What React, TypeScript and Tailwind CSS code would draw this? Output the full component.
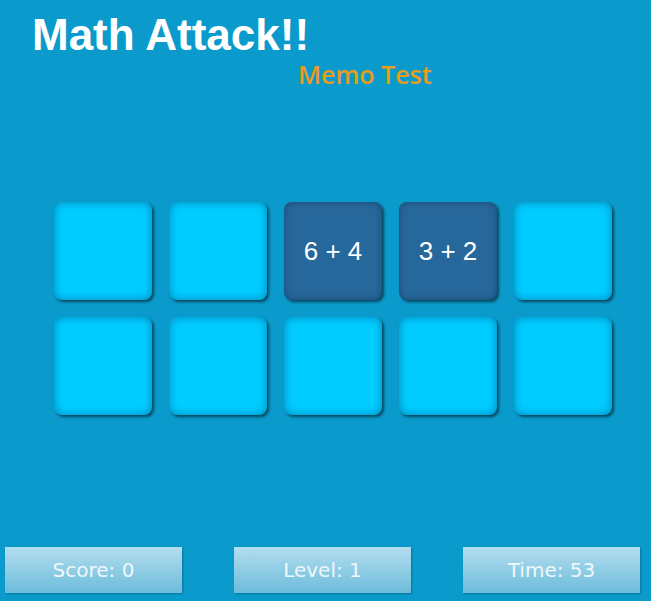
const tiles: (string | null)[] = [
  null, null, '6 + 4', '3 + 2', null,
  null, null, null, null, null,
];

const stats = ['Score: 0', 'Level: 1', 'Time: 53'];

function Tile({ label }: { label: string | null }) {
  const flipped = label !== null;
  return (
    <div
      className={`flex h-[98px] w-[98px] items-center justify-center rounded-[8px] ${
        flipped
          ? 'bg-[#27689c] shadow-[inset_0_0_7px_rgba(20,50,80,0.6),2px_2px_3px_rgba(0,0,0,0.55)]'
          : 'bg-[#00ccff] shadow-[inset_0_0_8px_rgba(10,110,160,0.8),2px_2px_3px_rgba(0,0,0,0.55)]'
      }`}
    >
      {flipped && (
        <span className="font-['Liberation_Sans',Arial,sans-serif] text-[26px] text-white">
          {label}
        </span>
      )}
    </div>
  );
}

export default function App() {
  return (
    <div className="flex h-[601px] w-[651px] flex-col overflow-hidden bg-[#0a9bcc]">
      <header className="h-[100px]">
        <h1 className="pl-[32px] pt-[11px] font-['Liberation_Sans',Arial,sans-serif] text-[44px] font-bold leading-[48px] text-white">
          Math Attack!!
        </h1>
        <p className="pl-[298px] pt-[1px] font-['Open_Sans',sans-serif] text-[25px] font-semibold leading-[28px] text-[#e89c1c]">
          Memo Test
        </p>
      </header>

      <main className="mt-[102px] grid w-fit grid-cols-5 gap-[17px] pl-[54px]">
        {tiles.map((t, i) => (
          <Tile key={i} label={t} />
        ))}
      </main>

      <footer className="mt-auto mb-[8px] flex justify-between px-[5px] pr-[11px]">
        {stats.map((s) => (
          <div
            key={s}
            className="flex h-[46px] w-[177px] items-center justify-center bg-gradient-to-b from-[#b3ddee] to-[#6bbcdb] font-['DejaVu_Sans',Verdana,sans-serif] text-[20px] text-[#eef8fc] shadow-[1px_1px_2px_rgba(0,0,0,0.25)]"
          >
            {s}
          </div>
        ))}
      </footer>
    </div>
  );
}
